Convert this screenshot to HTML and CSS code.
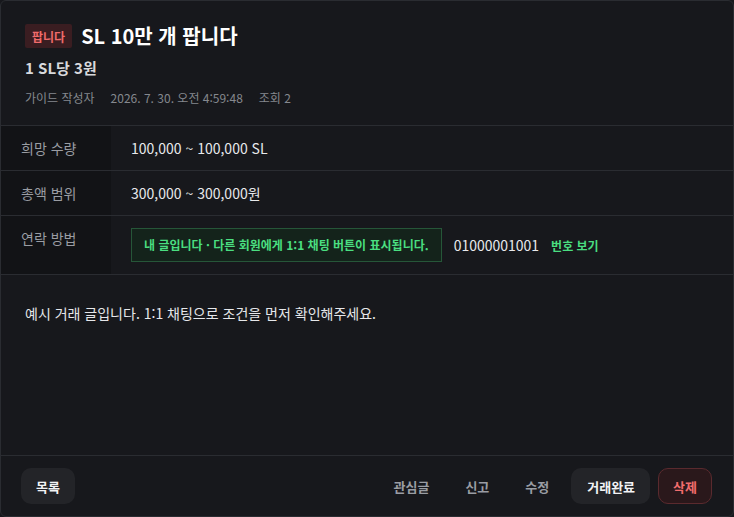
FILE: index.html
```html
<!DOCTYPE html>
<html lang="ko">
<head>
<meta charset="utf-8">
<title>SL 10만 개 팝니다</title>
<link rel="stylesheet" href="styles.css">
</head>
<body>
<article class="card">
  <header class="head">
    <div class="title-row">
      <span class="badge">팝니다</span>
      <h1 class="title">SL 10만 개 팝니다</h1>
    </div>
    <p class="price">1 SL당 3원</p>
    <div class="meta">
      <span>가이드 작성자</span>
      <span>2026. 7. 30. 오전 4:59:48</span>
      <span>조회 2</span>
    </div>
  </header>
  <dl class="info">
    <div class="row">
      <dt class="label">희망 수량</dt>
      <dd class="value">100,000 ~ 100,000 SL</dd>
    </div>
    <div class="row">
      <dt class="label">총액 범위</dt>
      <dd class="value">300,000 ~ 300,000원</dd>
    </div>
    <div class="row">
      <dt class="label">연락 방법</dt>
      <dd class="value contact">
        <span class="notice">내 글입니다 · 다른 회원에게 1:1 채팅 버튼이 표시됩니다.</span>
        <span class="phone">01000001001</span>
        <button class="link">번호 보기</button>
      </dd>
    </div>
  </dl>
  <div class="body">
    <p>예시 거래 글입니다. 1:1 채팅으로 조건을 먼저 확인해주세요.</p>
  </div>
  <footer class="foot">
    <button class="btn solid">목록</button>
    <div class="actions">
      <button class="btn ghost">관심글</button>
      <button class="btn ghost">신고</button>
      <button class="btn ghost">수정</button>
      <button class="btn solid wide">거래완료</button>
      <button class="btn danger">삭제</button>
    </div>
  </footer>
</article>
</body>
</html>
```
FILE: styles.css
```css
* { box-sizing: border-box; }
html, body { margin: 0; padding: 0; background: #17181c; }
body {
  font-family: "Noto Sans CJK KR", "Noto Sans", sans-serif;
  color: #e6e7ea;
}
.card {
  height: 100vh;
  display: flex;
  flex-direction: column;
  border: 1px solid #2a2c31;
  border-radius: 6px;
  background: #17181c;
  overflow: hidden;
}
.head {
  padding: 21px 24px 18px;
}
.title-row {
  display: flex;
  align-items: center;
  gap: 9px;
  height: 28px;
}
.badge {
  display: inline-flex;
  align-items: center;
  height: 24px;
  padding: 0 7px;
  background: #3a1d21;
  color: #f06b6b;
  font-size: 12px;
  font-weight: 700;
  border-radius: 2px;
}
.title {
  margin: 0;
  font-size: 20px;
  line-height: 28px;
  font-weight: 700;
  color: #ffffff;
}
.price {
  margin: 7px 0 0;
  font-size: 15px;
  line-height: 22px;
  font-weight: 700;
  color: #d8d9dc;
}
.meta {
  margin-top: 10px;
  display: flex;
  gap: 16px;
  font-size: 12px;
  line-height: 18px;
  color: #85888e;
}
.info {
  margin: 0;
  border-top: 1px solid #2a2c31;
}
.row {
  display: flex;
  border-bottom: 1px solid #2a2c31;
}
.label {
  width: 110px;
  flex: none;
  margin: 0;
  padding: 12px 20px;
  background: #121316;
  color: #9a9da3;
  font-size: 14px;
  line-height: 20px;
}
.value {
  margin: 0;
  padding: 12px 20px;
  font-size: 14px;
  line-height: 20px;
  color: #e8e9ec;
}
.contact {
  display: flex;
  align-items: center;
  gap: 12px;
}
.notice {
  display: inline-flex;
  align-items: center;
  height: 34px;
  padding: 0 12px;
  background: #14231b;
  border: 1px solid #265638;
  color: #4ade80;
  font-size: 12px;
  font-weight: 700;
}
.phone {
  font-size: 14px;
  color: #e8e9ec;
}
.link {
  border: 0;
  background: none;
  padding: 0;
  font-family: inherit;
  font-size: 12px;
  font-weight: 700;
  color: #4ade80;
}
.body {
  flex: 1;
  padding: 27px 24px;
}
.body p {
  margin: 0;
  font-size: 14px;
  line-height: 22px;
  color: #e6e7ea;
}
.foot {
  display: flex;
  justify-content: space-between;
  align-items: center;
  padding: 12px 21px 12px 20px;
  border-top: 1px solid #2a2c31;
}
.actions {
  display: flex;
  gap: 8px;
}
.btn {
  height: 36px;
  padding: 0 14px;
  border: 1px solid transparent;
  border-radius: 10px;
  font-family: inherit;
  font-size: 13px;
  font-weight: 700;
  background: none;
}
.solid {
  background: #232428;
  color: #f2f3f5;
}
.wide {
  padding: 0 14px 0 15px;
}
.ghost {
  color: #9a9da3;
  padding: 0 13px;
}
.danger {
  background: #2a181b;
  border-color: #5a2a2e;
  color: #f26d6d;
}
```
